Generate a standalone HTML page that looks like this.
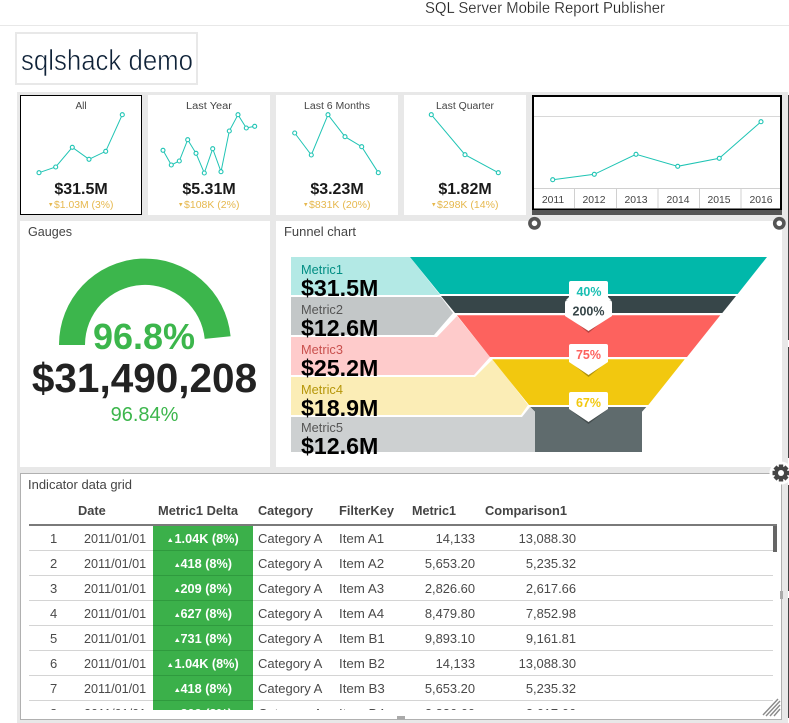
<!DOCTYPE html>
<html><head><meta charset="utf-8"><style>
html,body{margin:0;padding:0;background:#fff;width:789px;height:723px;overflow:hidden}
svg{display:block}
text{font-family:"Liberation Sans",sans-serif}
.l{fill:none;stroke:#1fc4b4;stroke-width:1}
.d circle{fill:#fff;stroke:#1fc4b4;stroke-width:1.1}
.t{font-size:10px;fill:#444;text-anchor:middle}
.v{font-size:16px;font-weight:bold;fill:#1a1a1a;text-anchor:middle}
.g{font-size:10.5px;fill:#e6b84e}
.y{font-size:10.4px;fill:#444;text-anchor:middle}
.m{font-size:12.8px}
.b{font-size:23.2px;font-weight:bold;fill:#000}
.h{font-size:12.8px;font-weight:bold;fill:#444}
.c{font-size:13px;fill:#4a4a4a}
.dt{font-size:12.6px;fill:#4a4a4a}
.it{font-size:13.3px;fill:#4a4a4a}
.e{font-size:12.9px;fill:#4a4a4a;text-anchor:end}
.w{font-size:12.7px;font-weight:bold;fill:#fff}
.p{font-size:12.5px;font-weight:bold;text-anchor:middle}
</style></head><body>
<svg width="789" height="723" viewBox="0 0 789 723" xmlns="http://www.w3.org/2000/svg">
<defs><clipPath id="cp"><rect x="21" y="526" width="759" height="184"/></clipPath></defs>
<rect width="789" height="723" fill="#fff"/>
<rect x="0" y="25" width="789" height="1" fill="#e8e8e8"/>
<text x="425" y="13" font-size="15.5" fill="#222" stroke="#fff" stroke-width=".22" textLength="240" lengthAdjust="spacingAndGlyphs">SQL Server Mobile Report Publisher</text>
<rect x="16" y="33" width="181" height="51" fill="#fff" stroke="#e8e8e8" stroke-width="2"/>
<text x="21" y="70" font-size="29" fill="#0f2238" stroke="#fff" stroke-width=".55" textLength="172" lengthAdjust="spacingAndGlyphs">sqlshack demo</text>

<rect x="17" y="92" width="771" height="631" fill="#e8e8e8"/>
<rect x="788" y="95" width="1" height="245" fill="#444"/>
<rect x="788" y="347" width="1" height="111" fill="#444"/>
<rect x="788" y="485" width="1" height="106" fill="#444"/>
<rect x="788" y="598" width="1" height="120" fill="#444"/>

<!-- cards -->
<rect x="20.5" y="95.5" width="121" height="119" fill="#fff" stroke="#000"/>
<rect x="148" y="95" width="122" height="120" fill="#fff"/>
<rect x="276" y="95" width="122" height="120" fill="#fff"/>
<rect x="404" y="95" width="122" height="120" fill="#fff"/>
<text class="t" x="81" y="109">All</text>
<text class="t" x="209" y="109" textLength="46" lengthAdjust="spacingAndGlyphs">Last Year</text>
<text class="t" x="337" y="109" textLength="66" lengthAdjust="spacingAndGlyphs">Last 6 Months</text>
<text class="t" x="465" y="109" textLength="58" lengthAdjust="spacingAndGlyphs">Last Quarter</text>

<polyline class="l" points="39,172.7 55.7,167 72.3,147.3 89,159.3 105.7,151.3 122.3,114.7"/>
<g class="d"><circle cx="39" cy="172.7" r="2"/><circle cx="55.7" cy="167" r="2"/><circle cx="72.3" cy="147.3" r="2"/><circle cx="89" cy="159.3" r="2"/><circle cx="105.7" cy="151.3" r="2"/><circle cx="122.3" cy="114.7" r="2"/></g>
<polyline class="l" points="163,150.3 171.3,165 179.3,161 187.7,139.7 196,153.3 204.3,173 212.7,148.7 221,171.7 229.3,131 238,114.7 246.3,128 254.7,126.3"/>
<g class="d"><circle cx="163" cy="150.3" r="2"/><circle cx="171.3" cy="165" r="2"/><circle cx="179.3" cy="161" r="2"/><circle cx="187.7" cy="139.7" r="2"/><circle cx="196" cy="153.3" r="2"/><circle cx="204.3" cy="173" r="2"/><circle cx="212.7" cy="148.7" r="2"/><circle cx="221" cy="171.7" r="2"/><circle cx="229.3" cy="131" r="2"/><circle cx="238" cy="114.7" r="2"/><circle cx="246.3" cy="128" r="2"/><circle cx="254.7" cy="126.3" r="2"/></g>
<polyline class="l" points="294.7,133 311.3,155 328,114.7 345,136.7 361.7,146.7 378.3,172.7"/>
<g class="d"><circle cx="294.7" cy="133" r="2"/><circle cx="311.3" cy="155" r="2"/><circle cx="328" cy="114.7" r="2"/><circle cx="345" cy="136.7" r="2"/><circle cx="361.7" cy="146.7" r="2"/><circle cx="378.3" cy="172.7" r="2"/></g>
<polyline class="l" points="431.3,114.7 465,154.7 498.3,172.7"/>
<g class="d"><circle cx="431.3" cy="114.7" r="2"/><circle cx="465" cy="154.7" r="2"/><circle cx="498.3" cy="172.7" r="2"/></g>

<text class="v" x="81" y="194">$31.5M</text>
<text class="v" x="209" y="194">$5.31M</text>
<text class="v" x="337" y="194">$3.23M</text>
<text class="v" x="465" y="194">$1.82M</text>
<polygon points="49,203 52.5,203 50.7,206.5" fill="#e6b84e"/><text class="g" x="54" y="208" textLength="59.5" lengthAdjust="spacingAndGlyphs">$1.03M (3%)</text>
<polygon points="179,203 182.5,203 180.7,206.5" fill="#e6b84e"/><text class="g" x="184" y="208" textLength="55.5" lengthAdjust="spacingAndGlyphs">$108K (2%)</text>
<polygon points="304,203 307.5,203 305.7,206.5" fill="#e6b84e"/><text class="g" x="309" y="208" textLength="61.5" lengthAdjust="spacingAndGlyphs">$831K (20%)</text>
<polygon points="432,203 435.5,203 433.7,206.5" fill="#e6b84e"/><text class="g" x="437" y="208" textLength="61.5" lengthAdjust="spacingAndGlyphs">$298K (14%)</text>

<!-- selected chart -->
<rect x="533" y="96" width="248" height="113.5" fill="#fff" stroke="#000" stroke-width="2"/>
<rect x="534" y="116" width="246" height="1" fill="#d8d8d8"/>
<rect x="534" y="188" width="246" height="1" fill="#d0d0d0"/>
<path d="M574.5 188V208M616.5 188V208M658 188V208M699.5 188V208M741 188V208" stroke="#d0d0d0" fill="none"/>
<polyline class="l" points="552.7,179.7 594.3,174.3 636,154.3 677.7,166.3 719.3,158.3 761,121.7"/>
<g class="d"><circle cx="552.7" cy="179.7" r="2"/><circle cx="594.3" cy="174.3" r="2"/><circle cx="636" cy="154.3" r="2"/><circle cx="677.7" cy="166.3" r="2"/><circle cx="719.3" cy="158.3" r="2"/><circle cx="761" cy="121.7" r="2"/></g>
<text class="y" x="553" y="203">2011</text>
<text class="y" x="594" y="203">2012</text>
<text class="y" x="636" y="203">2013</text>
<text class="y" x="678" y="203">2014</text>
<text class="y" x="719" y="203">2015</text>
<text class="y" x="761" y="203">2016</text>
<rect x="532" y="210" width="250" height="5" fill="#555"/>

<!-- gauges -->
<rect x="20" y="221" width="250" height="246" fill="#fff"/>
<text x="28" y="236" font-size="12.5" fill="#444" textLength="44" lengthAdjust="spacingAndGlyphs">Gauges</text>
<path d="M59 345A86 86 0 0 1 230.6 336.3L204.7 338.9A60 60 0 0 0 85 345Z" fill="#3cb64c"/>
<text x="144" y="349" font-size="36" font-weight="bold" fill="#3cb64c" text-anchor="middle">96.8%</text>
<text x="144.5" y="392" font-size="40.5" font-weight="bold" fill="#222" text-anchor="middle">$31,490,208</text>
<text x="144.5" y="421" font-size="20" fill="#3cb64c" text-anchor="middle">96.84%</text>

<!-- funnel -->
<rect x="276" y="221" width="506" height="246" fill="#fff"/>
<text x="284" y="236" font-size="12.5" fill="#444" textLength="72" lengthAdjust="spacingAndGlyphs">Funnel chart</text>
<polygon points="291,257 410,257 440,295 291,295" fill="#b3e9e5"/>
<polygon points="291,297 441,297 453,313 434,335 291,335" fill="#c3c7c8"/>
<polygon points="291,337 437,337 457,316 490,357 474,375 291,375" fill="#fecbcb"/>
<polygon points="291,377 475,377 493,359 528,405 521,415 291,415" fill="#fbedb6"/>
<polygon points="291,417 522,417 530,407 535,412 535,452 291,452" fill="#cdd0d1"/>
<polygon points="410,257 767,257 737.7,294 440,294" fill="#01b8aa"/>
<polygon points="441,296 736,296 722.3,313 455,313" fill="#374649"/>
<polygon points="457,315.3 720.3,315.3 687,357 490,357" fill="#fd625e"/>
<polygon points="492.3,359.3 684.7,359.3 648.3,405 529,405" fill="#f2c80f"/>
<polygon points="530.3,407 646.3,407 642,411.7 642,452 535,452 535,411.7" fill="#5f6b6d"/>

<text class="m" x="301" y="274" fill="#018d83">Metric1</text><text class="b" x="301" y="296">$31.5M</text>
<text class="m" x="301" y="314" fill="#555">Metric2</text><text class="b" x="301" y="336">$12.6M</text>
<text class="m" x="301" y="354" fill="#c9504d">Metric3</text><text class="b" x="301" y="376">$25.2M</text>
<text class="m" x="301" y="394" fill="#b69609">Metric4</text><text class="b" x="301" y="416">$18.9M</text>
<text class="m" x="301" y="432" fill="#555">Metric5</text><text class="b" x="301" y="454">$12.6M</text>

<path d="M571 281H606Q608 281 608 283V297L611 300H566L569 297V283Q569 281 571 281Z" fill="#fff"/>
<text class="p" x="589" y="296" fill="#19bfb3">40%</text>
<path d="M567 315L588.5 333L610 315Z" fill="#000" opacity=".28"/>
<path d="M568 300H609Q612 300 612 303V316L588.5 331L565 316V303Q565 300 568 300Z" fill="#fff"/>
<text class="p" x="588.500" y="315.5" fill="#374649">200%</text>
<path d="M569 361L588.5 377L608 361Z" fill="#000" opacity=".28"/>
<path d="M571 344H606Q608 344 608 346V362L588.5 375L569 362V346Q569 344 571 344Z" fill="#fff"/>
<text class="p" x="588.5" y="359" fill="#fd625e">75%</text>
<path d="M569 409L588.5 424L608 409Z" fill="#000" opacity=".28"/>
<path d="M571 392H606Q608 392 608 394V409L588.5 422L569 409V394Q569 392 571 392Z" fill="#fff"/>
<text class="p" x="588.5" y="407" fill="#f2c80f">67%</text>

<!-- handles -->
<circle cx="534.5" cy="223.3" r="4.6" fill="#fff" stroke="#555" stroke-width="3.6"/>
<circle cx="779.3" cy="223.3" r="4.6" fill="#fff" stroke="#555" stroke-width="3.6"/>

<!-- grid -->
<rect x="20.5" y="473.5" width="761" height="246" fill="#fff" stroke="#b0b0b0" stroke-width="1"/>
<text x="28" y="489" font-size="12.5" fill="#444" textLength="104" lengthAdjust="spacingAndGlyphs">Indicator data grid</text>
<text class="h" x="78" y="515">Date</text>
<text class="h" x="158" y="515" textLength="80" lengthAdjust="spacingAndGlyphs">Metric1 Delta</text>
<text class="h" x="258" y="515" textLength="55" lengthAdjust="spacingAndGlyphs">Category</text>
<text class="h" x="339" y="515" textLength="55" lengthAdjust="spacingAndGlyphs">FilterKey</text>
<text class="h" x="412" y="515" textLength="44" lengthAdjust="spacingAndGlyphs">Metric1</text>
<text class="h" x="485" y="515" textLength="82" lengthAdjust="spacingAndGlyphs">Comparison1</text>
<rect x="29" y="524" width="748" height="2" fill="#7a7a7a"/>
<rect x="153" y="526" width="100" height="184" fill="#3bb04a"/>
<path d="M29 550.5H153M253 550.5H773M29 575.5H153M253 575.5H773M29 600.5H153M253 600.5H773M29 625.5H153M253 625.5H773M29 650.5H153M253 650.5H773M29 675.5H153M253 675.5H773M29 700.5H153M253 700.5H773" stroke="#d4d4d4" fill="none"/>
<path d="M153 550.5H253M153 575.5H253M153 600.5H253M153 625.5H253M153 650.5H253M153 675.5H253M153 700.5H253" stroke="#2f9a3e" fill="none"/>
<rect x="773" y="526" width="4" height="26" fill="#666"/>

<g clip-path="url(#cp)">
<text class="c" x="50" y="543">1</text><text class="dt" x="84" y="543">2011/01/01</text><text class="c" x="258" y="543">Category A</text><text class="it" x="339" y="543">Item A1</text><text class="e" x="475" y="543">14,133</text><text class="e" x="576" y="543">13,088.30</text>
<polygon points="168,542 172.5,542 170.2,538" fill="#fff"/><text class="w" x="174.5" y="543">1.04K (8%)</text>
<text class="c" x="50" y="568">2</text><text class="dt" x="84" y="568">2011/01/01</text><text class="c" x="258" y="568">Category A</text><text class="it" x="339" y="568">Item A2</text><text class="e" x="475" y="568">5,653.20</text><text class="e" x="576" y="568">5,235.32</text>
<polygon points="175,567 179.5,567 177.2,563" fill="#fff"/><text class="w" x="180.5" y="568">418 (8%)</text>
<text class="c" x="50" y="593">3</text><text class="dt" x="84" y="593">2011/01/01</text><text class="c" x="258" y="593">Category A</text><text class="it" x="339" y="593">Item A3</text><text class="e" x="475" y="593">2,826.60</text><text class="e" x="576" y="593">2,617.66</text>
<polygon points="175,592 179.5,592 177.2,588" fill="#fff"/><text class="w" x="180.5" y="593">209 (8%)</text>
<text class="c" x="50" y="618">4</text><text class="dt" x="84" y="618">2011/01/01</text><text class="c" x="258" y="618">Category A</text><text class="it" x="339" y="618">Item A4</text><text class="e" x="475" y="618">8,479.80</text><text class="e" x="576" y="618">7,852.98</text>
<polygon points="175,617 179.5,617 177.2,613" fill="#fff"/><text class="w" x="180.5" y="618">627 (8%)</text>
<text class="c" x="50" y="643">5</text><text class="dt" x="84" y="643">2011/01/01</text><text class="c" x="258" y="643">Category A</text><text class="it" x="339" y="643">Item B1</text><text class="e" x="475" y="643">9,893.10</text><text class="e" x="576" y="643">9,161.81</text>
<polygon points="175,642 179.5,642 177.2,638" fill="#fff"/><text class="w" x="180.5" y="643">731 (8%)</text>
<text class="c" x="50" y="668">6</text><text class="dt" x="84" y="668">2011/01/01</text><text class="c" x="258" y="668">Category A</text><text class="it" x="339" y="668">Item B2</text><text class="e" x="475" y="668">14,133</text><text class="e" x="576" y="668">13,088.30</text>
<polygon points="168,667 172.5,667 170.2,663" fill="#fff"/><text class="w" x="174.5" y="668">1.04K (8%)</text>
<text class="c" x="50" y="693">7</text><text class="dt" x="84" y="693">2011/01/01</text><text class="c" x="258" y="693">Category A</text><text class="it" x="339" y="693">Item B3</text><text class="e" x="475" y="693">5,653.20</text><text class="e" x="576" y="693">5,235.32</text>
<polygon points="175,692 179.5,692 177.2,688" fill="#fff"/><text class="w" x="180.5" y="693">418 (8%)</text>
<text class="c" x="50" y="718">8</text><text class="dt" x="84" y="718">2011/01/01</text><text class="c" x="258" y="718">Category A</text><text class="it" x="339" y="718">Item B4</text><text class="e" x="475" y="718">2,826.60</text><text class="e" x="576" y="718">2,617.66</text>
<text class="w" x="180.5" y="718">209 (8%)</text>
</g>

<!-- resize grip -->
<path d="M763 715L778 699M766 716L780 701M770 716L780 705M774 716L780 709" stroke="#8a8a8a" stroke-width="1.4" fill="none"/>
<!-- side handles -->
<rect x="397" y="716" width="8" height="3.5" fill="#aaa"/>
<rect x="780" y="591" width="3" height="8" fill="#aaa"/>
<!-- gear -->
<circle cx="781" cy="473" r="11.5" fill="#fff"/>
<g fill="#444">
<circle cx="781" cy="473" r="6.6"/>
<rect x="778.8" y="464.5" width="4.4" height="17"/>
<rect x="778.8" y="464.5" width="4.4" height="17" transform="rotate(45 781 473)"/>
<rect x="778.8" y="464.5" width="4.4" height="17" transform="rotate(90 781 473)"/>
<rect x="778.8" y="464.5" width="4.4" height="17" transform="rotate(135 781 473)"/>
</g>
<circle cx="781" cy="473" r="3" fill="#fff"/>
</svg>
</body></html>
